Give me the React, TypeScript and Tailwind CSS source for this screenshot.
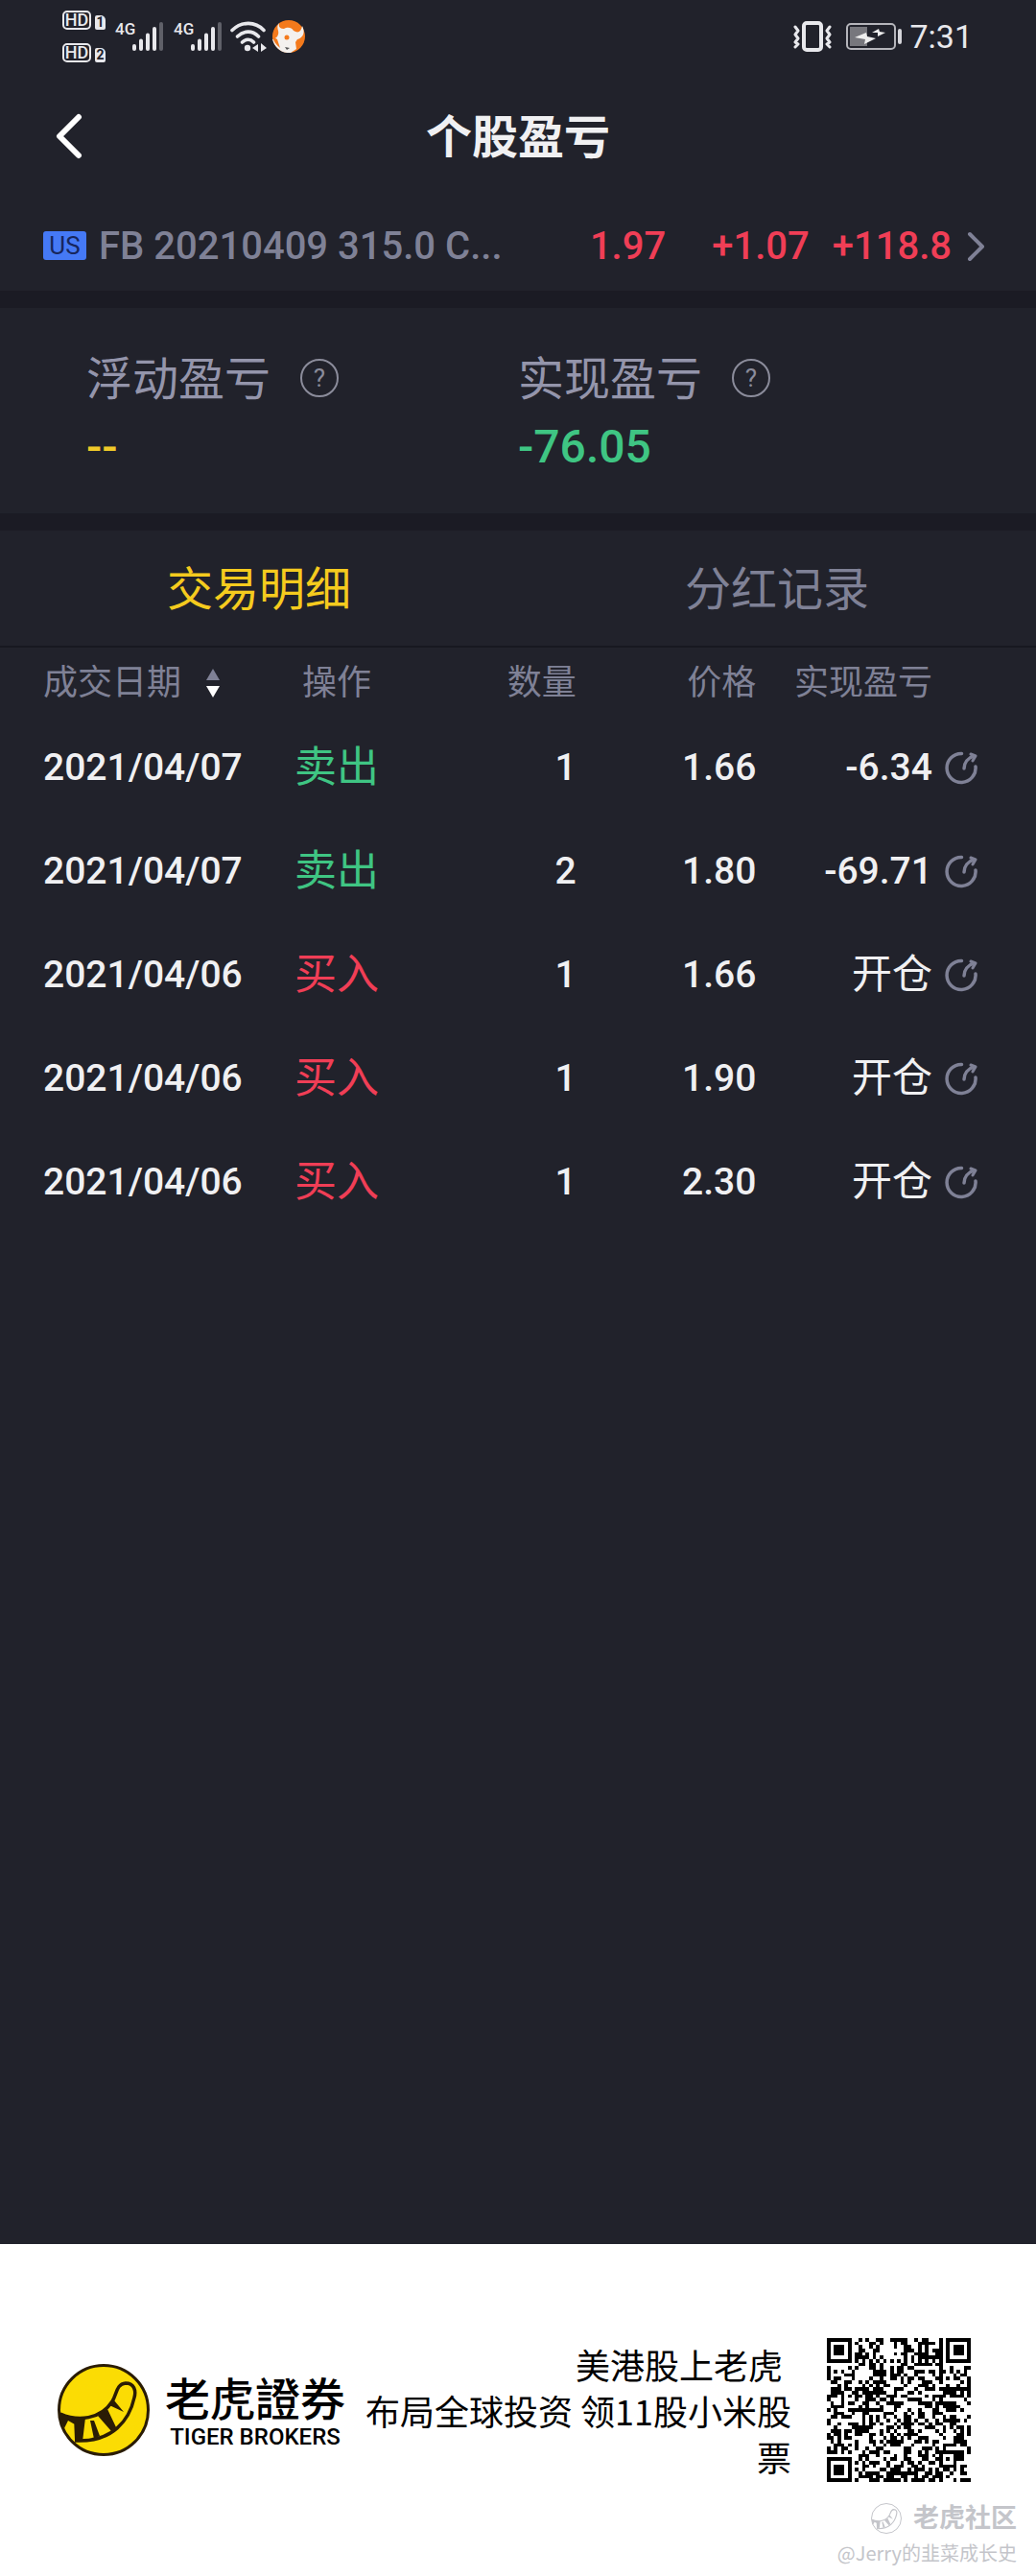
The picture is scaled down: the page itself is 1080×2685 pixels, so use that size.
import React from "react";

const trades = [
  { date: "2021/04/07", side: "卖出", qty: "1", price: "1.66", pnl: "-6.34" },
  { date: "2021/04/07", side: "卖出", qty: "2", price: "1.80", pnl: "-69.71" },
  { date: "2021/04/06", side: "买入", qty: "1", price: "1.66", pnl: "开仓" },
  { date: "2021/04/06", side: "买入", qty: "1", price: "1.90", pnl: "开仓" },
  { date: "2021/04/06", side: "买入", qty: "1", price: "2.30", pnl: "开仓" },
];

function HdBadge({ sim }: { sim: string }) {
  return (
    <div className="flex h-5 items-end gap-1">
      <span className="flex h-5 w-[30px] items-center justify-center rounded-[5px] border-2 border-[#e8e8ec] text-[18px] leading-none font-medium text-[#e8e8ec]">
        HD
      </span>
      <span className="flex h-[15px] w-[11px] items-center justify-center rounded-[2px] rounded-tr-[5px] bg-[#e8e8ec] text-[14px] leading-none font-bold text-[#21222b]">
        {sim}
      </span>
    </div>
  );
}

function Signal() {
  return (
    <div className="flex h-8 items-start">
      <span className="w-[20px] text-[17px] leading-4 font-medium">4G</span>
      <svg viewBox="0 0 34 32" className="-ml-[3px] h-8 w-[34px]" fill="none" strokeWidth="4" strokeLinecap="round" aria-hidden="true">
        <path stroke="#e8e8ec" d="M3 26v3M10 20.500v8.500M17 14.500v14.500M24 8v21" />
        <path stroke="#5f6068" d="M31 3v26" />
      </svg>
    </div>
  );
}

function StatusBar() {
  return (
    <div className="flex h-[75px] items-center justify-between pr-[66px] pl-[65px] text-[#e8e8ec]">
      <div className="flex items-center">
        <div className="flex flex-col gap-[14px]">
          <HdBadge sim="1" />
          <HdBadge sim="2" />
        </div>
        <div className="ml-[10px] flex gap-[10px]">
          <Signal />
          <Signal />
        </div>
        <svg viewBox="0 0 38 32" className="ml-2 h-8 w-[38px]" fill="none" stroke="#e8e8ec" strokeWidth="3.600" strokeLinecap="round" aria-hidden="true">
          <path d="M2 9.500C12 0 26 0 35 9.500M7.500 16c7-6.500 15.500-6.500 22 0M12.500 22c4-3.600 8.500-3.600 12 0" />
          <circle cx="18" cy="28" r="3.200" fill="#e8e8ec" stroke="none" />
          <path d="M29 24v8l-6-4zM32 32v-9l6 5z" fill="#e8e8ec" stroke="none" />
        </svg>
        <svg viewBox="0 0 34 34" className="ml-[6px] h-[34px] w-[34px]" aria-hidden="true">
          <circle cx="17" cy="17" r="17" fill="#f47a1c" />
          <path fill="#f4f1ee" d="M7 3C6 7 8 9 12 9c3-2 8-2 10 2 5 3 8 1 9-5 3 6 2 12-5 14l-2 3 1 7-6 4C9 35 2 28 0 20c5-1 7-5 6-9-1-3-1-6 1-8Z" />
          <circle cx="15" cy="18" r="2.500" fill="#f47a1c" />
          <path d="m13 28 5 1-3 2Z" fill="#555" />
          <path d="M0 17c1 5 4 9 8 12l-3-9Z" fill="#f47a1c" />
        </svg>
      </div>
      <div className="flex items-center">
        <svg viewBox="0 0 40 32" className="h-8 w-10" fill="none" stroke="#e8e8ec" strokeLinecap="round" strokeLinejoin="round" aria-hidden="true">
          <rect x="11" y="2" width="18" height="28" rx="3" strokeWidth="4" />
          <path strokeWidth="3" d="m2 6 3 4-3 4 3 4-3 4 3 2-3 3M38 6l-3 4 3 4-3 4 3 4-3 2 3 3" />
        </svg>
        <svg viewBox="0 0 58 28" className="ml-[15px] h-7 w-[58px]" aria-hidden="true">
          <rect x="1" y="1" width="50" height="26" rx="4" fill="none" stroke="#b5b5bb" strokeWidth="2" />
          <rect x="4" y="4" width="18" height="20" fill="#77777d" />
          <path fill="#eee" d="m9 15 12-5 1 4 9 2-12 6 1-5ZM27 10l7-4 1 3 6 1-8 4v-4Z" />
          <rect x="54" y="6" width="4" height="16" rx="2" fill="#d5d5da" />
        </svg>
        <time className="ml-2 text-[34px] leading-9">7:31</time>
      </div>
    </div>
  );
}

function HelpButton({ label }: { label: string }) {
  return (
    <button type="button" aria-label={label} className="mb-[5px] flex h-10 w-10 items-center justify-center rounded-full border-2 border-[#8b8c9b] text-[26px] leading-none text-[#8b8c9b]">
      ?
    </button>
  );
}

function Summary({ label, value, tone }: { label: string; value: string; tone: string }) {
  return (
    <div>
      <div className="flex items-center gap-[31px]">
        <h2 className="text-[48px] leading-[60px] text-[#9495ab]">{label}</h2>
        <HelpButton label={label + "说明"} />
      </div>
      <p className={"mt-3 text-[48px] leading-[56px] font-medium " + tone}>{value}</p>
    </div>
  );
}

function ShareIcon() {
  return (
    <svg viewBox="0 0 34 36" className="h-9 w-[34px]" fill="none" stroke="#7f8196" strokeWidth="3.500" strokeLinecap="round" strokeLinejoin="round" aria-hidden="true">
      <path d="M17.500 3.500A15 15 0 1 0 32 17M20 19c0-6 4-11 10-13" />
      <path d="m27 4 5 2-3 5" strokeWidth="3" />
    </svg>
  );
}

function TigerMark({ className, ink, fill }: { className: string; ink: string; fill: string }) {
  return (
    <svg viewBox="0 0 96 96" className={className} aria-hidden="true">
      <circle cx="48" cy="48" r="46.500" fill={fill} stroke={ink} strokeWidth="3" />
      <path fill="none" stroke={ink} strokeWidth="3.500" d="M3 52c18 8 42 6 54-13 5-8 4-18 14-19 9 0 11 8 9 15-5 23-22 47-62 45" />
      <path fill={ink} d="M2 50c7 4 13 6 18 6l-2 7-7-4-4 8C4 62 2 57 2 50ZM17 55l12 1-3 25-8-2ZM34 59l4 0 6 16-6 3ZM42 54l10-7 9 19-5 4ZM54 43l5-5 10 12Z" />
    </svg>
  );
}

const QR_SIZE = 41;

function isDark(x: number, y: number): boolean {
  const corners = [[0, 0], [QR_SIZE - 7, 0], [0, QR_SIZE - 7]];
  for (const [cx, cy] of corners) {
    const dx = Math.abs(x - cx - 3);
    const dy = Math.abs(y - cy - 3);
    const ring = Math.max(dx, dy);
    if (ring <= 4) return ring !== 2 && ring !== 4;
  }
  const align = Math.max(Math.abs(x - 34), Math.abs(y - 34));
  if (align <= 2) return align !== 1;
  if (x === 6 || y === 6) return (x + y) % 2 === 0;
  let h = Math.imul(x + 11, 374761393) ^ Math.imul(y + 7, 668265263);
  h = Math.imul(h ^ (h >>> 13), 1274126177);
  return ((h ^ (h >>> 16)) & 1) === 1;
}

function QrCode() {
  let d = "";
  for (let y = 0; y < QR_SIZE; y++) {
    for (let x = 0; x < QR_SIZE; x++) {
      if (isDark(x, y)) d += "M" + x + " " + y + "h1v1h-1z";
    }
  }
  return (
    <svg viewBox="0 0 41 41" className="h-[150px] w-[150px] shrink-0" role="img" aria-label="QR code" shapeRendering="crispEdges">
      <path d={d} fill="#000" />
    </svg>
  );
}

export default function App() {
  return (
    <div className="flex min-h-screen flex-col bg-[#21222b] font-[Roboto,'Noto_Sans_CJK_SC',sans-serif] text-[#f0f0f2]">
      <StatusBar />
      <header className="grid h-[134px] grid-cols-[1fr_auto_1fr] items-center px-[56px]">
        <button type="button" aria-label="返回" className="h-12 w-8">
          <svg viewBox="0 0 32 48" className="h-12 w-8" fill="none" stroke="#fff" strokeWidth="6" strokeLinecap="round" strokeLinejoin="round" aria-hidden="true">
            <path d="M26 4 6 24l20 20" />
          </svg>
        </button>
        <h1 className="pt-1 text-[48px] leading-[60px] font-bold">个股盈亏</h1>
      </header>

      <a href="#quote" className="flex h-[94px] items-center pr-[52px] pl-[45px] text-[40px] leading-[48px]">
        <span className="flex h-[30px] w-[45px] items-center justify-center rounded-[3px] bg-[#4579f5] text-[26px] leading-none text-[#17265c]">US</span>
        <span className="ml-[13px] pt-[2px] font-medium text-[#7f8196]">FB 20210409 315.0 C...</span>
        <span className="ml-auto flex items-center pt-[2px] font-medium text-[#f03e56]">
          <span>1.97</span>
          <span className="ml-12">+1.07</span>
          <span className="ml-6">+118.8</span>
          <svg viewBox="0 0 20 32" className="ml-4 h-8 w-5" fill="none" stroke="#7f8196" strokeWidth="4" strokeLinecap="round" strokeLinejoin="round" aria-hidden="true">
            <path d="m3 3 13 13L3 29" />
          </svg>
        </span>
      </a>

      <section className="grid grid-cols-2 border-y-[18px] border-[#1b1b24] pt-[45px] pr-0 pb-[41px] pl-[90px]">
        <Summary label="浮动盈亏" value="--" tone="text-[#f0c929]" />
        <div className="-ml-[45px]">
          <Summary label="实现盈亏" value="-76.05" tone="text-[#3fc583]" />
        </div>
      </section>

      <div role="tablist" className="grid h-[122px] grid-cols-2 border-b-2 border-[#171820] text-[48px] leading-[60px]">
        <button type="button" role="tab" aria-selected="true" className="pt-[3px] text-[#f5cb1e]">交易明细</button>
        <button type="button" role="tab" aria-selected="false" className="pt-[3px] text-[#7f8196]">分红记录</button>
      </div>

      <main className="flex-1 pt-[2px]">
        <table className="w-full table-fixed">
          <colgroup>
            <col className="w-[28%]" />
            <col className="w-[9%]" />
            <col className="w-[19%]" />
            <col className="w-[17%]" />
            <col className="w-[17%]" />
            <col className="w-[10%]" />
          </colgroup>
          <thead>
            <tr className="h-[69px] text-[36px] leading-[44px] whitespace-nowrap text-[#7f8196]">
              <th className="p-0 pl-[45px] text-left font-normal">
                <button type="button" className="flex items-center gap-[25px]">
                  成交日期
                  <svg viewBox="0 0 16 30" className="h-[30px] w-4" aria-hidden="true">
                    <path d="m8 0 7 12H1Z" fill="#7f8196" />
                    <path d="m8 30 7-12H1Z" fill="#fff" />
                  </svg>
                </button>
              </th>
              <th className="p-0 text-center font-normal">操作</th>
              <th className="p-0 pr-1 text-right font-normal">数量</th>
              <th className="p-0 text-right font-normal">价格</th>
              <th className="p-0 text-right font-normal">实现盈亏</th>
              <th className="p-0" aria-label="分享" />
            </tr>
          </thead>
          <tbody>
            {trades.map((t, i) => (
              <tr key={i} className="h-[108px] text-[39px] leading-[48px] font-medium whitespace-nowrap">
                <td className="p-0 pl-[45px]">{t.date}</td>
                <td className={t.side === "卖出" ? "p-0 text-center text-[44px] font-normal text-[#3fc583]" : "p-0 text-center text-[44px] font-normal text-[#f03e56]"}>{t.side}</td>
                <td className="p-0 pr-1 text-right">{t.qty}</td>
                <td className="p-0 text-right">{t.price}</td>
                <td className={t.pnl === "开仓" ? "p-0 text-right text-[42px] font-normal" : "p-0 text-right"}>{t.pnl}</td>
                <td className="p-0 pl-[13px]">
                  <button type="button" aria-label="分享" className="block"><ShareIcon /></button>
                </td>
              </tr>
            ))}
          </tbody>
        </table>
      </main>

      <footer className="bg-white pt-[98px] pr-[20px] pb-[10px] pl-[60px] text-black">
        <div className="flex items-center pr-[48px]">
          <TigerMark className="h-24 w-24 shrink-0" ink="#2a1c05" fill="#fbdc04" />
          <div className="ml-[16px] shrink-0">
            <p className="font-['Noto_Sans_CJK_TC',sans-serif] text-[47px] leading-[56px] font-medium">老虎證券</p>
            <p className="text-center text-[24px] leading-[28px] font-medium">TIGER BROKERS</p>
          </div>
          <p className="ml-auto w-[446px] text-right font-['Noto_Sans_CJK_SC',sans-serif] text-[36px] leading-[48px]">
            <span className="pr-[9px]">美港股上老虎</span>
            <br />
            布局全球投资 领11股小米股票
          </p>
          <div className="ml-[37px] shrink-0"><QrCode /></div>
        </div>
        <div className="mt-5 flex flex-col items-end text-[#c4c5ca]">
          <div className="flex items-center gap-3">
            <TigerMark className="h-8 w-8" ink="#c4c5ca" fill="#fff" />
            <span className="text-[27px] leading-9 font-bold">老虎社区</span>
          </div>
          <span className="mt-1 font-['Noto_Sans_CJK_SC',sans-serif] text-[20px] leading-7">@Jerry的韭菜成长史</span>
        </div>
      </footer>
    </div>
  );
}
